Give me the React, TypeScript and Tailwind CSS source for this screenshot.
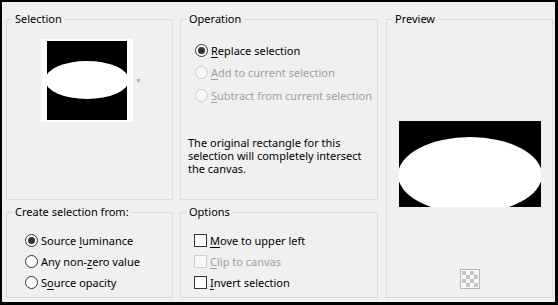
import type { ReactNode } from 'react';

function Radio({ checked, disabled }: { checked?: boolean; disabled?: boolean }) {
  return (
    <span
      className={
        disabled
          ? 'w-[13px] h-[13px] rounded-full border border-[#cccccc] bg-[#f7f7f7] flex items-center justify-center shrink-0'
          : 'w-[13px] h-[13px] rounded-full border border-[#333333] bg-white flex items-center justify-center shrink-0'
      }
    >
      {checked && <span className="w-[7px] h-[7px] rounded-full bg-[#333333]" />}
    </span>
  );
}

function Check({ disabled }: { disabled?: boolean }) {
  return (
    <span
      className={
        disabled
          ? 'w-[13px] h-[13px] border border-[#cccccc] bg-[#f7f7f7] shrink-0'
          : 'w-[13px] h-[13px] border border-[#333333] bg-white shrink-0'
      }
    />
  );
}

function Group({ title, className, children }: { title: string; className: string; children: ReactNode }) {
  return (
    <fieldset className={`border border-[#dcdcdc] ${className}`}>
      <legend className="ml-[6px] px-[2px] leading-[16px]">{title}</legend>
      {children}
    </fieldset>
  );
}

function Row({ control, disabled, children }: { control: ReactNode; disabled?: boolean; children: ReactNode }) {
  return (
    <div className={disabled ? 'flex items-center gap-[3px] text-[#a0a0a0]' : 'flex items-center gap-[3px]'}>
      {control}
      <span className="leading-[13px]">{children}</span>
    </div>
  );
}

function Checker() {
  const cells = [];
  for (let r = 0; r < 4; r++) {
    for (let c = 0; c < 4; c++) {
      if ((r + c) % 2 === 0) cells.push(<rect key={`${r}-${c}`} x={2 + c * 4} y={2 + r * 4} width={4} height={4} fill="#c4c4c4" />);
    }
  }
  return (
    <svg width="20" height="20" viewBox="0 0 20 20">
      <rect x="0.5" y="0.5" width="19" height="19" fill="#fafafa" stroke="#b4b4b4" />
      {cells}
    </svg>
  );
}

export default function App() {
  return (
    <div className="w-[558px] h-[305px] box-border border-black border-t-2 border-l-2 border-r-[3px] border-b-[3px] bg-[#f0f0f0] pl-[4px] pt-[9px] flex text-[11px] text-black font-['Noto_Sans',sans-serif]">
      <div className="w-[167px] flex flex-col gap-[4px]">
        <Group title="Selection" className="h-[189px]">
          <div className="flex items-center ml-[34px] mt-[12px]">
            <svg width="92" height="83" viewBox="0 0 92 83">
              <rect width="92" height="83" fill="#ffffff" />
              <rect x="6" y="2" width="80" height="79" fill="#000000" />
              <ellipse cx="46" cy="41" rx="42" ry="19" fill="#ffffff" />
            </svg>
            <span className="ml-[2px] text-[7px] text-[#b0b0b0] leading-none">▼</span>
          </div>
        </Group>
        <Group title="Create selection from:" className="h-[94px]">
          <div className="flex flex-col ml-[18px] mt-[10px]">
            <div className="h-[21px] flex items-center">
              <Row control={<Radio checked />}>
                Source <u className="underline-offset-2">l</u>uminance
              </Row>
            </div>
            <div className="h-[21px] flex items-center">
              <Row control={<Radio />}>
                Any non-<u className="underline-offset-2">z</u>ero value
              </Row>
            </div>
            <div className="h-[21px] flex items-center">
              <Row control={<Radio />}>
                S<u className="underline-offset-2">o</u>urce opacity
              </Row>
            </div>
          </div>
        </Group>
      </div>

      <div className="w-[198px] ml-[7px] flex flex-col gap-[4px]">
        <Group title="Operation" className="h-[189px]">
          <div className="flex flex-col ml-[14px] mt-[12px]">
            <div className="h-[22px] flex items-center">
              <Row control={<Radio checked />}>
                <u className="underline-offset-2">R</u>eplace selection
              </Row>
            </div>
            <div className="h-[23px] flex items-center">
              <Row control={<Radio disabled />} disabled>
                <u className="underline-offset-2">A</u>dd to current selection
              </Row>
            </div>
            <div className="h-[22px] flex items-center">
              <Row control={<Radio disabled />} disabled>
                <u className="underline-offset-2">S</u>ubtract from current selection
              </Row>
            </div>
          </div>
          <p className="ml-[7px] mt-[30px] leading-[13px] w-[180px]">
            The original rectangle for this selection will completely intersect the canvas.
          </p>
        </Group>
        <Group title="Options" className="h-[94px]">
          <div className="flex flex-col ml-[13px] mt-[10px]">
            <div className="h-[21px] flex items-center">
              <Row control={<Check />}>
                <u className="underline-offset-2">M</u>ove to upper left
              </Row>
            </div>
            <div className="h-[21px] flex items-center">
              <Row control={<Check disabled />} disabled>
                <u className="underline-offset-2">C</u>lip to canvas
              </Row>
            </div>
            <div className="h-[21px] flex items-center">
              <Row control={<Check />}>
                <u className="underline-offset-2">I</u>nvert selection
              </Row>
            </div>
          </div>
        </Group>
      </div>

      <div className="w-[167px] ml-[8px]">
        <Group title="Preview" className="h-[287px]">
          <div className="flex flex-col items-center">
            <svg width="142" height="86" viewBox="0 0 142 86" className="mt-[94px]">
              <rect width="142" height="86" fill="#000000" />
              <ellipse cx="71" cy="54" rx="72" ry="38" fill="#ffffff" />
            </svg>
            <div className="mt-[62px]">
              <Checker />
            </div>
          </div>
        </Group>
      </div>
    </div>
  );
}
